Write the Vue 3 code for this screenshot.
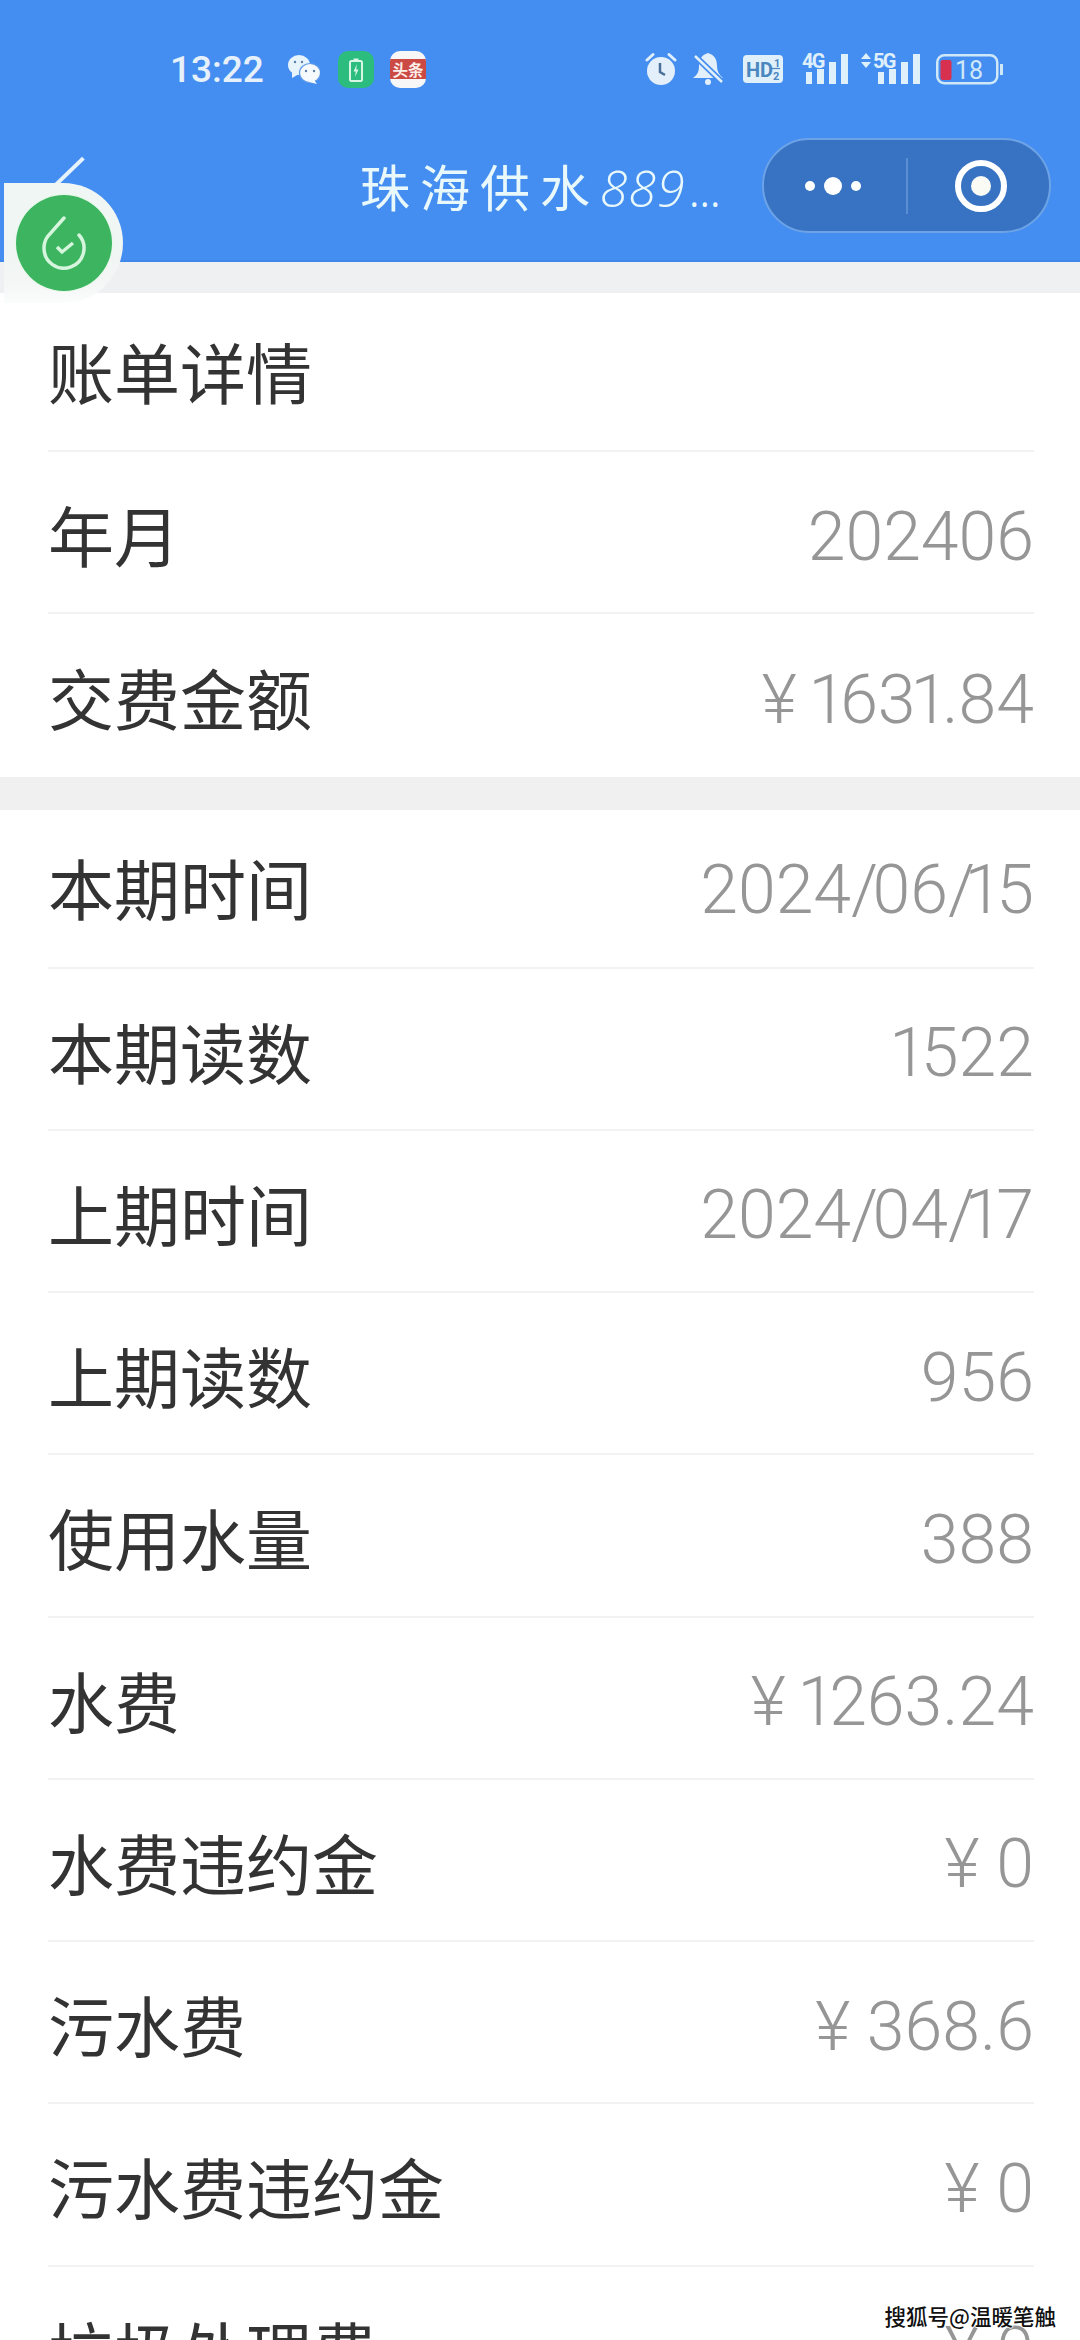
<script setup>
const sections = [
  [
    { label: '账单详情', value: '' },
    { label: '年月', value: '202406' },
    { label: '交费金额', value: '¥ 1631.84' }
  ],
  [
    { label: '本期时间', value: '2024/06/15' },
    { label: '本期读数', value: '1522' },
    { label: '上期时间', value: '2024/04/17' },
    { label: '上期读数', value: '956' },
    { label: '使用水量', value: '388' },
    { label: '水费', value: '¥ 1263.24' },
    { label: '水费违约金', value: '¥ 0' },
    { label: '污水费', value: '¥ 368.6' },
    { label: '污水费违约金', value: '¥ 0' },
    { label: '垃圾处理费', value: '¥ 0' }
  ]
]
// The reference's numerals set "1" and "/" narrower than the other digits.
const parts = (value) => value.split(/([1/])/).filter(Boolean)
const isNarrow = (part) => part === '1' || part === '/'
</script>

<template>
  <div class="page">
    <header class="header">
      <div class="status">
        <div class="status-left">
          <span class="time">13:22</span>
          <svg class="i-wechat" width="32" height="29" viewBox="0 0 32 29">
            <ellipse cx="11" cy="10" rx="11" ry="10" fill="#e8f4fc" />
            <path d="M4 16 L4 23 L11 19 Z" fill="#e8f4fc" />
            <ellipse cx="22" cy="18" rx="10.5" ry="9.5" fill="#f6fafd" stroke="#5f9ae8" stroke-width="1.2" />
            <path d="M26 25 L29 29 L21 27 Z" fill="#f6fafd" />
            <circle cx="7" cy="7" r="1.2" fill="#5a7fa8" />
            <circle cx="14" cy="7" r="1.2" fill="#5a7fa8" />
            <circle cx="18" cy="16" r="1.2" fill="#5a7fa8" />
            <circle cx="26" cy="16" r="1.2" fill="#5a7fa8" />
          </svg>
          <svg class="i-green" width="36" height="37" viewBox="0 0 36 37">
            <rect width="36" height="37" rx="10" fill="#2cbd7e" />
            <rect x="12" y="10" width="12" height="20" rx="1.5" fill="none" stroke="#d8f5e6" stroke-width="2" />
            <rect x="15.5" y="7.5" width="5" height="2.5" fill="#d8f5e6" />
            <path d="M19 13 L15.5 20.5 H17.8 L17 26 L20.5 18.5 H18.2 Z" fill="#d8f5e6" />
          </svg>
          <div class="toutiao"><span>头条</span></div>
        </div>
        <div class="status-right">
          <svg width="32" height="34" viewBox="0 0 32 34">
            <path d="M2 8 L8 2.5 M30 8 L24 2.5" stroke="#dfeefa" stroke-width="3" stroke-linecap="round" />
            <circle cx="16" cy="19" r="14" fill="#e3f0fb" />
            <path d="M15 11 V20 L20 23" fill="none" stroke="#4a6f99" stroke-width="2.5" />
          </svg>
          <svg width="31" height="34" viewBox="0 0 31 34">
            <path d="M15 1 C8 3 6 8 6 14 C6 20 4 23 0 26 H30 C26 23 24 19 24 14 C24 8 22 3 15 1 Z" fill="#e3f0fb" />
            <circle cx="15" cy="30" r="3" fill="#e3f0fb" />
            <path d="M2 4 L29 30" stroke="#458ef1" stroke-width="6" />
            <path d="M2 4 L29 30" stroke="#e3f0fb" stroke-width="2.5" />
          </svg>
          <svg class="i-hd" width="40" height="28" viewBox="0 0 40 28">
            <rect width="40" height="28" rx="4" fill="#dff0fa" />
            <text x="3" y="21.5" class="hd">HD</text>
            <text x="31" y="12" class="frac">1</text>
            <text x="30" y="25" class="frac">2</text>
            <path d="M29 13.5 H37" stroke="#4a86bf" stroke-width="1.2" />
          </svg>
          <svg class="i-4g" width="46" height="32" viewBox="0 0 46 32">
            <text x="0" y="15" class="net">4G</text>
            <rect x="4" y="19" width="6" height="12" fill="#dff0fa" />
            <rect x="15" y="16" width="7" height="15" fill="#dff0fa" />
            <rect x="27" y="9" width="7" height="22" fill="#dff0fa" />
            <rect x="39" y="1" width="7" height="30" fill="#dff0fa" />
          </svg>
          <svg class="i-5g" width="60" height="32" viewBox="0 0 60 32">
            <path d="M1 6 L6 0 L11 6 Z M1 9 L6 15 L11 9 Z" fill="#dff0fa" />
            <text x="13" y="15" class="net">5G</text>
            <rect x="18" y="19" width="6" height="12" fill="#dff0fa" />
            <rect x="29" y="16" width="7" height="15" fill="#dff0fa" />
            <rect x="41" y="9" width="7" height="22" fill="#dff0fa" />
            <rect x="53" y="1" width="7" height="30" fill="#dff0fa" />
          </svg>
          <svg class="i-batt" width="67" height="32" viewBox="0 0 67 32">
            <rect x="1.25" y="2.25" width="60" height="28" rx="7" fill="none" stroke="#cfe8f7" stroke-width="2.5" />
            <rect x="4.5" y="7" width="11" height="20" rx="2" fill="#d8304f" />
            <text x="19" y="25.5" class="batt">18</text>
            <rect x="64" y="11" width="3" height="11" fill="#cfe8f7" />
          </svg>
        </div>
      </div>
      <div class="nav">
        <span class="back"></span>
        <div class="title"><span class="t-cn">珠海供水</span><span class="t-num">889</span><span class="t-dots">...</span></div>
        <div class="capsule">
          <div class="capsule-side left">
            <i class="dot"></i><i class="dot big"></i><i class="dot"></i>
          </div>
          <div class="capsule-side right">
            <span class="ring"></span>
          </div>
        </div>
      </div>
    </header>

    <div class="badge">
      <div class="badge-circle">
        <svg width="96" height="96" viewBox="15 195 96 96">
          <path d="M63 218 L47 236 C44 240 43 243 43 248 A20 20 0 1 0 78 235" fill="none" stroke="#d5f5dd" stroke-width="3.5" stroke-linecap="round" />
          <path d="M56 247 L61 252 L72 243" fill="none" stroke="#d5f5dd" stroke-width="3.5" />
        </svg>
      </div>
    </div>

    <main class="content">
      <section v-for="(rows, s) in sections" :key="s" class="section">
        <div v-for="row in rows" :key="row.label" class="row">
          <span class="label">{{ row.label }}</span>
          <span v-if="row.value" class="value"><template v-for="(part, p) in parts(row.value)" :key="p"><span v-if="isNarrow(part)" :class="part === '1' ? 'one' : 'slash'">{{ part }}</span><template v-else>{{ part }}</template></template></span>
        </div>
      </section>
    </main>

    <div class="watermark">搜狐号@温暖笔触</div>
  </div>
</template>

<style scoped>
.page {
  position: relative;
  width: 1080px;
  height: 2340px;
  overflow: hidden;
  background: #f0f0f0;
  font-family: "Noto Sans CJK SC", "Noto Sans", sans-serif;
}
.header {
  height: 262px;
  background: #458ef1;
  box-sizing: border-box;
  padding-top: 50px;
  border-bottom: 2px solid #3f87e8;
}
.status {
  display: flex;
  justify-content: space-between;
  align-items: center;
  height: 38px;
  padding: 0 77px 0 170px;
}
.status-left,
.status-right {
  display: flex;
  align-items: center;
}
.status-right svg { margin-left: 16px; flex: none; }
.status-right svg.i-hd { margin-left: 19px; }
.status-right svg.i-4g { margin-left: 19px; }
.status-right svg.i-5g { margin-left: 12px; }
.time {
  font-family: Roboto, sans-serif;
  font-weight: 500;
  font-size: 37px;
  color: #e6f1fb;
  width: 118px;
}
.i-wechat { margin-right: 18px; }
.toutiao {
  width: 36px;
  height: 37px;
  margin-left: 16px;
  border-radius: 10px;
  background: #f7f7f7;
  display: flex;
  align-items: center;
  overflow: hidden;
}
.toutiao span {
  display: block;
  width: 100%;
  height: 20px;
  line-height: 20px;
  background: #cc4a44;
  color: #fbeee8;
  font-size: 15.5px;
  font-weight: 700;
  text-align: center;
}
.hd { font: 700 20px "Roboto", sans-serif; fill: #4a86bf; }
.frac { font: 700 11px "Roboto", sans-serif; fill: #4a86bf; }
.net { font: 700 20px "Roboto", sans-serif; fill: #dff0fa; letter-spacing: -1.8px; }
.batt { font: 400 25px "Roboto", sans-serif; fill: #cfe8f7; }

.nav {
  position: relative;
  display: flex;
  align-items: center;
  height: 95px;
  margin-top: 50px;
  padding-right: 29px;
}
.back {
  position: absolute;
  left: 49px;
  top: 32px;
  width: 40px;
  height: 4px;
  background: #e6f3fd;
  transform: rotate(-44deg);
}
.title {
  margin-left: 360px;
  color: #e8f8fb;
  display: flex;
  align-items: baseline;
  font-weight: 400;
}
.t-cn { font-size: 50px; letter-spacing: 10px; }
.t-num {
  font-size: 50px;
  font-weight: 300;
  letter-spacing: 1px;
  font-family: "Open Sans", sans-serif;
  font-style: italic;
}
.t-dots { font-size: 36px; margin-left: 4px; letter-spacing: 1px; font-family: "Open Sans", sans-serif; }
.capsule {
  margin-left: auto;
  width: 289px;
  height: 95px;
  box-sizing: border-box;
  border: 2px solid #6da3e6;
  border-radius: 48px;
  background: #3773c2;
  display: flex;
  align-items: center;
}
.capsule-side {
  box-sizing: border-box;
  height: 56px;
  display: flex;
  align-items: center;
  justify-content: center;
  gap: 9px;
}
.capsule-side.left {
  width: 142px;
  padding-right: 4px;
}
.capsule-side.right {
  width: 143px;
  border-left: 2px solid #5b8fd4;
  padding-left: 4px;
}
.dot {
  width: 10px;
  height: 10px;
  border-radius: 50%;
  background: #fff;
}
.dot.big { width: 18px; height: 18px; }
.ring {
  box-sizing: border-box;
  width: 52px;
  height: 52px;
  border: 6px solid #fff;
  border-radius: 50%;
  display: flex;
  align-items: center;
  justify-content: center;
}
.ring::after {
  content: "";
  width: 20px;
  height: 20px;
  border-radius: 50%;
  background: #fbfbf6;
}

.badge {
  position: absolute;
  left: 4px;
  top: 183px;
  width: 119px;
  height: 120px;
  border-radius: 0 60px 60px 0;
  background: linear-gradient(#f0f6f4 60%, #f5f6f6 85%, #fbfcfc);
  display: flex;
  align-items: center;
  justify-content: center;
  z-index: 2;
}
.badge-circle {
  width: 96px;
  height: 96px;
  border-radius: 50%;
  background: #3cb460;
  box-shadow: 0 0 0 1px #e5f8e9;
}
.badge-circle svg { display: block; }

.content { border-top: 31px solid #eef0f1; }
.section {
  background: #fff;
  padding: 0 46px 0 48px;
  margin-bottom: 33px;
}
.row {
  height: 162.25px;
  box-sizing: border-box;
  padding-top: 6px;
  display: flex;
  justify-content: space-between;
  align-items: center;
  border-bottom: 2px solid #f2f2f2;
}
.row:first-child {
  height: 159px;
  padding-top: 0;
}
.row:last-child { border-bottom: 0; }
.label {
  font-size: 66px;
  color: #333;
  margin-top: -4px;
}
.value {
  font-family: Roboto, sans-serif;
  font-weight: 300;
  font-size: 68px;
  color: #969696;
  margin-top: 3px;
}
.one { letter-spacing: -6px; margin-left: -5px; }
.slash { letter-spacing: -5.5px; }
.watermark {
  position: absolute;
  right: 24px;
  top: 2303px;
  font-size: 21.5px;
  font-weight: 500;
  line-height: 26px;
  color: #111;
  text-shadow: 1px 0 #fff, -1px 0 #fff, 0 1px #fff, 0 -1px #fff;
  z-index: 3;
}
</style>
